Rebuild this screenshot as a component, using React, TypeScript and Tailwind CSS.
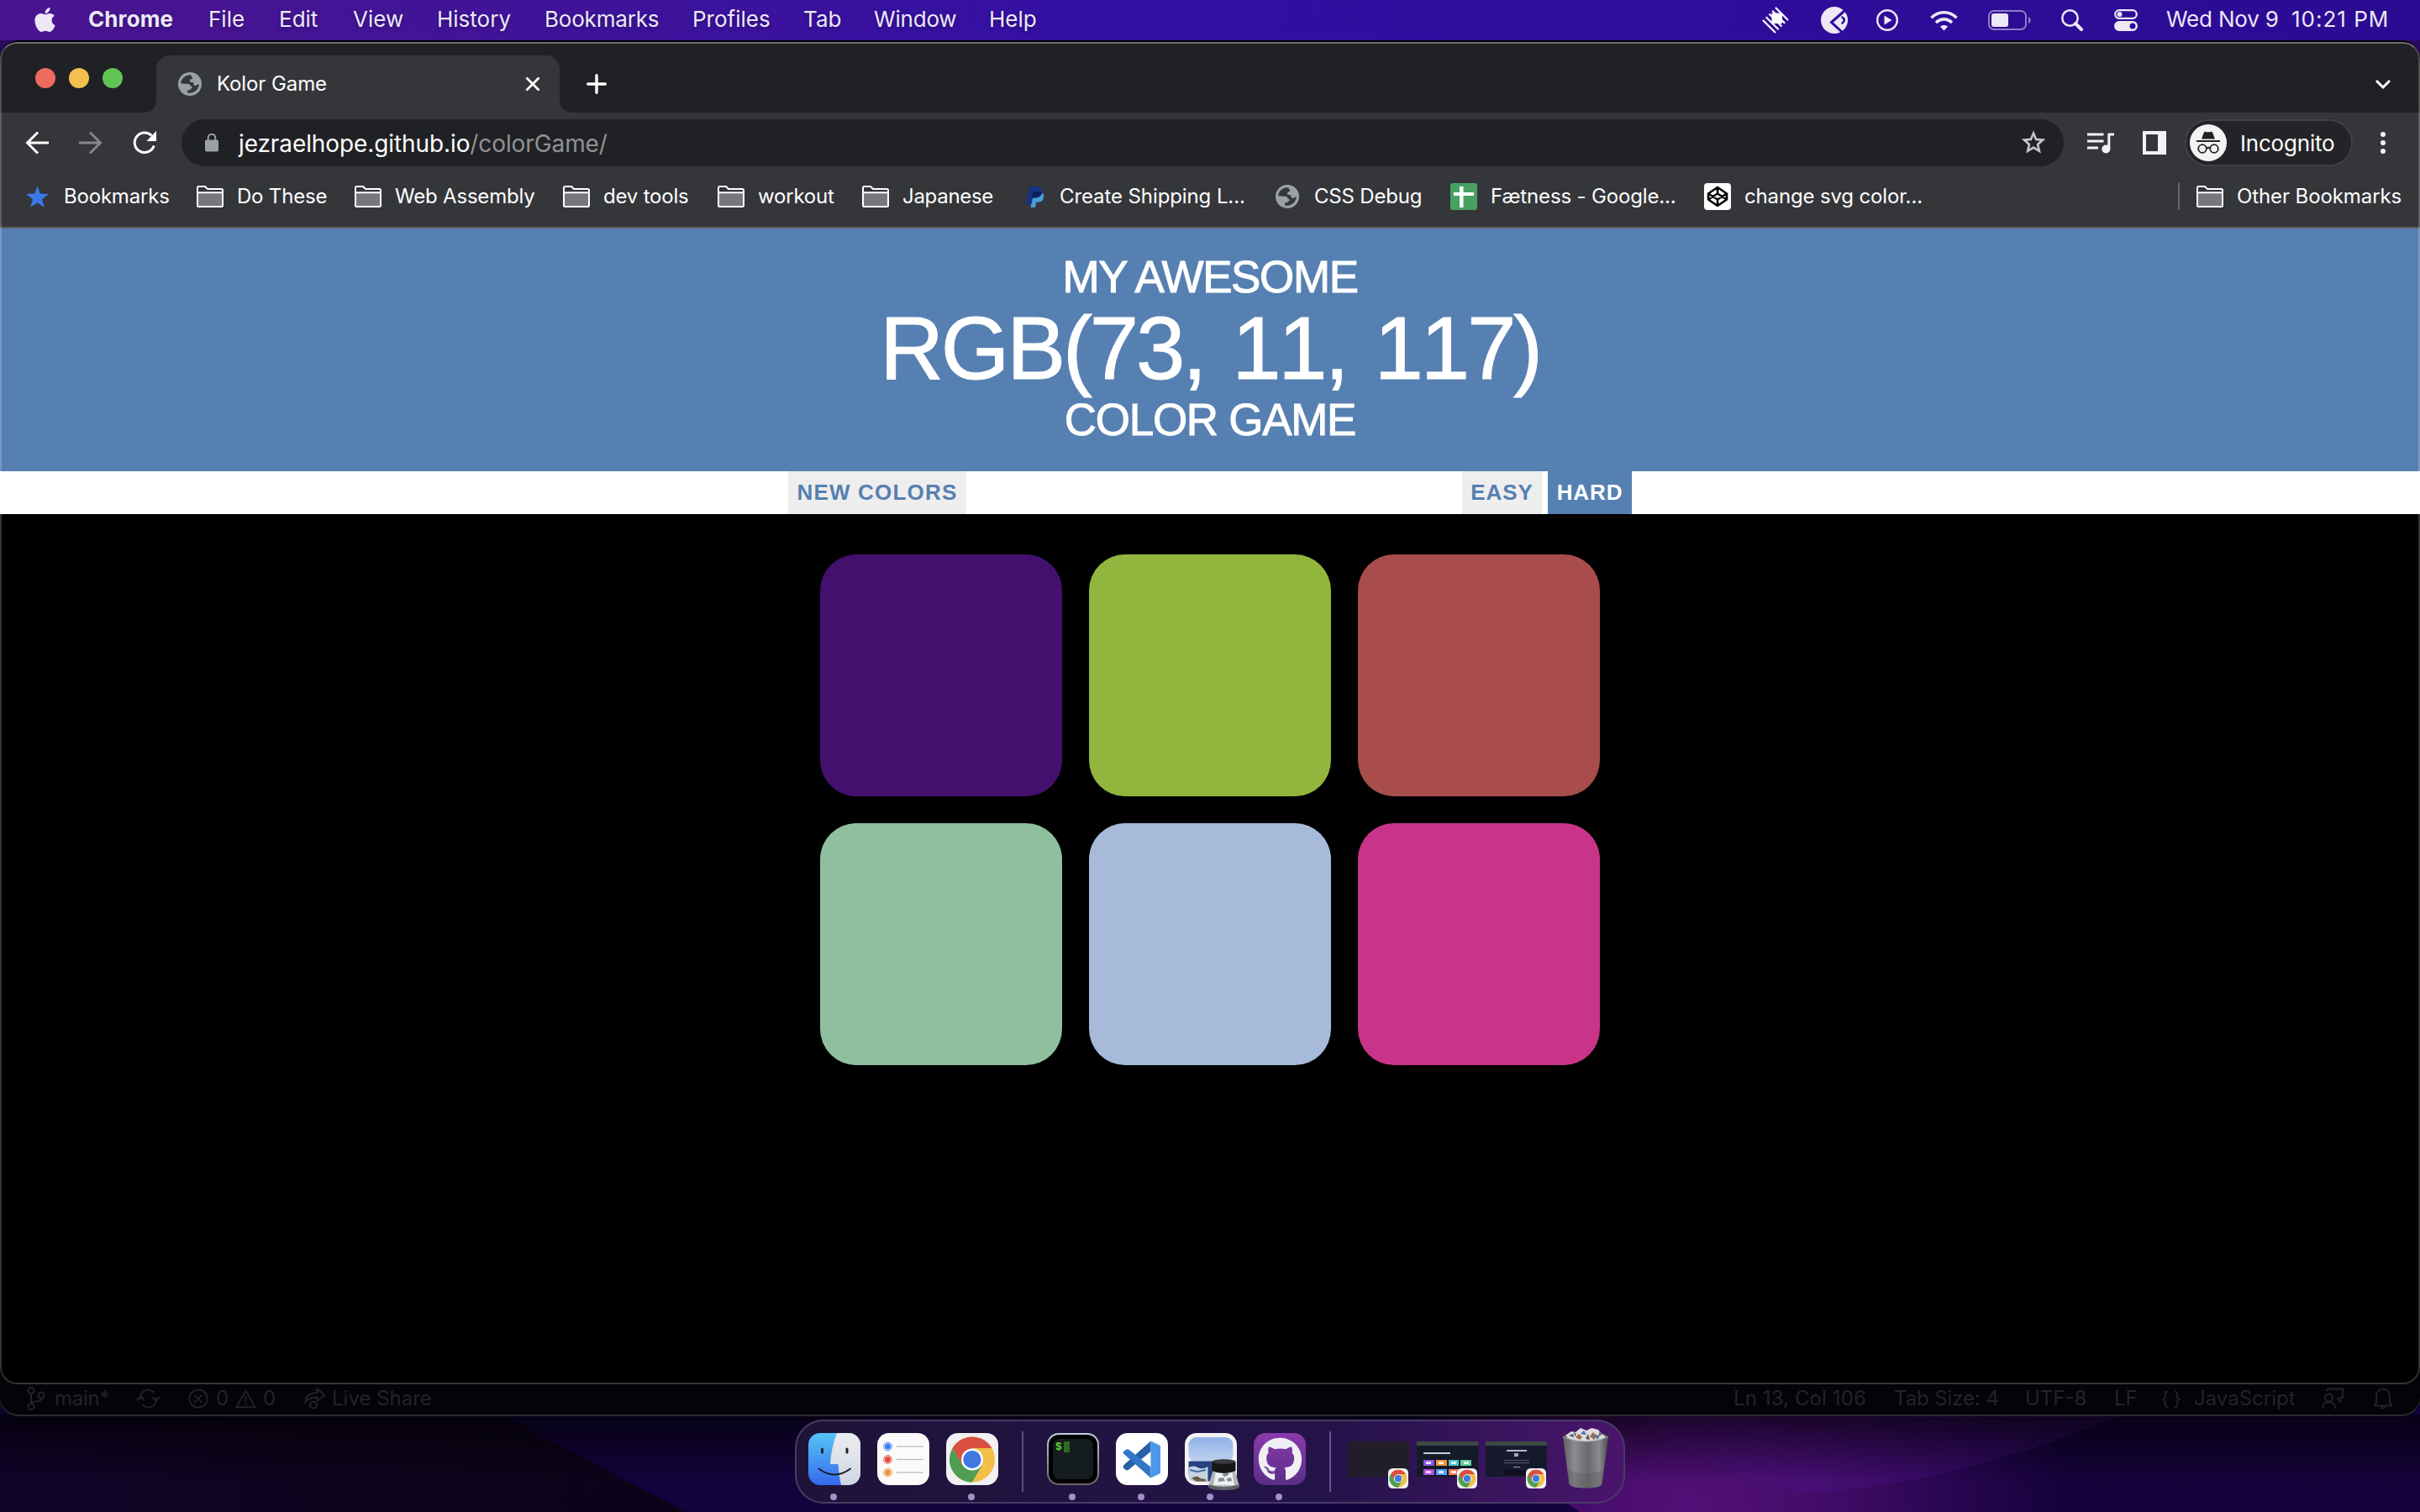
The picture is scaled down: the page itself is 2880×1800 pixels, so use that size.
import type { ReactNode } from "react";
import { FaApple, FaGithub } from "react-icons/fa";

const MENU: [string, string][] = [
  ["Chrome", "w-[143px] font-bold tracking-[0.1px]"],
  ["File", "w-[84px]"],
  ["Edit", "w-[88px]"],
  ["View", "w-[100px]"],
  ["History", "w-[128px]"],
  ["Bookmarks", "w-[176px] tracking-[-0.2px]"],
  ["Profiles", "w-[132px]"],
  ["Tab", "w-[84px]"],
  ["Window", "w-[137px] tracking-[-0.2px]"],
  ["Help", "w-[80px]"],
];

const SQUARES = [
  "bg-[#43106e]",
  "bg-[#91b53d]",
  "bg-[#a84c4c]",
  "bg-[#8fbf9f]",
  "bg-[#a8bada]",
  "bg-[#c83489]",
];

function MenuBar() {
  return (
    <div className="flex h-12 shrink-0 items-center bg-linear-to-r from-[#4a148f] via-[#330fa3] via-45% to-[#2b0b92] pl-10 pb-[2px] text-[26px] text-[#ece8f6]">
      <FaApple className="mr-[38px] h-[33px] w-[27px]" />
      {MENU.map(([t, c]) => (
        <span key={t} className={`${c} pb-px whitespace-nowrap [text-shadow:0_2px_4px_rgba(0,0,0,0.3)]`}>
          {t}
        </span>
      ))}
      <div className="ml-auto flex h-full items-center pt-[2px]">
        <svg className="mr-[38px] h-8 w-8" viewBox="0 0 32 32" fill="none" stroke="#fff" strokeWidth="2.200">
          <path d="M16 1l15 15M12.200 4.700l15 15M8.500 8.500l15 15M4.700 12.200l15 15M1 16l15 15" />
          <path d="M11.500 7.500h12.500v12.500h-12.500z" fill="#fff" stroke="none" />
        </svg>
        <svg className="mr-[34px] h-8 w-8" viewBox="0 0 32 32">
          <circle cx="16" cy="16" r="16" fill="#ece8f6" />
          <path d="M28 5 12.500 18.500 25 30" fill="none" stroke="#2b0c9b" strokeWidth="3" />
          <path d="M25.500 12.500c3 2 3 5 0 7" fill="none" stroke="#2b0c9b" strokeWidth="2.600" strokeLinecap="round" />
        </svg>
        <svg className="mr-[38px] h-[26px] w-[26px]" viewBox="0 0 26 26" fill="none">
          <circle cx="13" cy="13" r="11.800" stroke="#ece8f6" strokeWidth="2.400" />
          <path d="M9.500 7.500v11l9-5.500z" fill="#ece8f6" />
        </svg>
        <svg className="mr-[36px] h-[25px] w-[33px]" viewBox="0 0 33 25" fill="none" stroke="#ece8f6" strokeWidth="3.600">
          <path d="M1.500 9.200C10 .5 23 .5 31.500 9.200" />
          <path d="M7 15c5.500-5.500 13.500-5.500 19 0" />
          <path d="M16.500 24.500 12 19.700c2.500-2.400 6.500-2.400 9 0z" fill="#ece8f6" stroke="none" />
        </svg>
        <svg className="mr-[36px] h-6 w-[51px]" viewBox="0 0 51 24">
          <rect x="1" y="1" width="44" height="22" rx="6" fill="none" stroke="#8f7dc8" strokeWidth="2" />
          <rect x="4" y="4" width="20" height="16" rx="3" fill="#ece8f6" />
          <path d="M48 8c3.500 1.500 3.500 6.500 0 8z" fill="#8f7dc8" />
        </svg>
        <svg className="mr-[37px] h-[26px] w-[26px]" viewBox="0 0 26 26" fill="none" stroke="#ece8f6">
          <circle cx="10.500" cy="10.500" r="9.200" strokeWidth="2.500" />
          <path d="m17 17 7 7" strokeWidth="4" strokeLinecap="round" />
        </svg>
        <svg className="mr-[34px] h-[26px] w-7" viewBox="0 0 28 26">
          <rect x="1.200" y="1.200" width="25.600" height="9.600" rx="4.800" fill="none" stroke="#ece8f6" strokeWidth="2.200" />
          <circle cx="6.500" cy="6" r="3" fill="#ece8f6" />
          <rect y="14" width="28" height="12" rx="6" fill="#ece8f6" />
          <circle cx="22" cy="20" r="3.500" fill="#2b0c98" />
        </svg>
      </div>
      <span className="w-[149px] pb-px whitespace-nowrap tracking-[-0.2px]">Wed Nov 9</span>
      <span className="w-[153px] pb-px whitespace-nowrap tracking-[1px]">10:21 PM</span>
    </div>
  );
}

function Globe({ className }: { className: string }) {
  return (
    <svg viewBox="0 0 28 28" className={className}>
      <circle cx="14" cy="14" r="14" fill="#9aa0a6" />
      <path
        d="M15.500 3.200C9 2.700 4.200 7 3 12.800c1.500 1 4 .9 8 .9 2.500 0 3.400 1 3.600 2.800 3 .3 2.800 3-.1 3.300v1.500h-3.300v3.300c7 1.300 13.200-3.300 13.600-10.300-1.800.2-3 .8-3.800 2-2.500-.7-3-2.500-2.800-4.400h-4V8.500c2-.2 3-.6 3.100-2.300-1.300-.3-1.900-1.300-1.800-3z"
        fill="#35363a"
      />
    </svg>
  );
}

function Folder() {
  return (
    <svg viewBox="0 0 32 26" className="h-[26px] w-8">
      <path d="M1 2.500Q1 1 2.500 1H10l3 3h16.500Q31 4 31 5.500v18q0 1.500-1.500 1.500h-27Q1 25 1 23.500z" fill="#35363a" stroke="#fff" strokeWidth="2" />
      <path d="M2 8.500h28V24H2z" fill="#77787b" />
      <path d="M1 8.200h30" stroke="#fff" strokeWidth="2" />
    </svg>
  );
}

function TabStrip() {
  return (
    <div className="flex h-[84px] shrink-0 items-stretch bg-[#202124] pt-0.5">
      <div className="flex w-[170px] items-center gap-4 pl-[42px]">
        <span className="size-6 rounded-full bg-[#ed6a5e]" />
        <span className="size-6 rounded-full bg-[#f5bf4f]" />
        <span className="size-6 rounded-full bg-[#61c554]" />
      </div>
      <div className="mt-3.5 flex">
        <svg viewBox="0 0 16 16" className="size-4 self-end">
          <path d="M16 0v16H0Q16 16 16 0" fill="#35363a" />
        </svg>
        <div className="flex w-[480px] items-center rounded-t-[16px] bg-[#35363a] pl-[26px] text-2xl tracking-[-0.1px]">
          <Globe className="mr-[18px] size-7" />
          Kolor Game
          <svg viewBox="0 0 18 18" className="mr-[23px] ml-auto size-[18px]" stroke="#fff" strokeWidth="2.800">
            <path d="M1.500 1.500l15 15M16.500 1.500l-15 15" />
          </svg>
        </div>
        <svg viewBox="0 0 16 16" className="size-4 self-end">
          <path d="M0 0v16h16Q0 16 0 0" fill="#35363a" />
        </svg>
        <svg viewBox="0 0 24 24" className="ml-4 size-6 self-center" stroke="#fff" strokeWidth="3.400" strokeLinecap="round">
          <path d="M12 1.700v20.600M1.700 12h20.600" />
        </svg>
      </div>
      <svg viewBox="0 0 20 14" className="mt-[14px] mr-[34px] ml-auto h-3.5 w-5 self-center" fill="none" stroke="#fff" strokeWidth="3">
        <path d="m2 3 8 8 8-8" />
      </svg>
    </div>
  );
}

function Toolbar() {
  return (
    <div className="flex h-[72px] shrink-0 items-center bg-[#35363a] pl-[30px]">
      <svg viewBox="0 0 28 28" className="mr-9 size-7" fill="none" stroke="#fff" strokeWidth="2.900">
        <path d="M28 14H3M15 1.500 2.500 14 15 26.500" />
      </svg>
      <svg viewBox="0 0 28 28" className="mr-9 size-7" fill="none" stroke="#86878a" strokeWidth="2.900">
        <path d="M0 14h25M13 1.500 25.500 14 13 26.500" />
      </svg>
      <svg viewBox="0 0 28 28" className="mr-[30px] size-7" fill="none" stroke="#fff" strokeWidth="3">
        <path d="M22.500 5.500A11.800 11.800 0 1 0 25.200 17.500" />
        <path d="M28 0v12H16.500z" fill="#fff" stroke="none" />
      </svg>
      <div className="flex h-14 w-[2240px] items-center rounded-full bg-[#202124] pl-7 text-[28px] text-white">
        <svg viewBox="0 0 16 22" className="mr-6 mb-[1px] h-[22px] w-4">
          <rect y="7.500" width="16" height="14" rx="1.800" fill="#9aa0a6" />
          <path d="M3.700 8V5a4.300 4.300 0 0 1 8.600 0v3" fill="none" stroke="#9aa0a6" strokeWidth="2" />
        </svg>
        <span className="pt-px tracking-[-0.1px]">
          jezraelhope.github.io<span className="text-[#8f9194]">/colorGame/</span>
        </span>
        <svg viewBox="0 0 30 30" className="mr-[21px] ml-auto size-[30px]" fill="none" stroke="#c4c5c6" strokeWidth="2.600">
          <path d="m15 3.500 3.100 7.400 8 .7-6.100 5.300 1.900 7.900L15 20.600l-6.900 4.200 1.900-7.900-6.100-5.300 8-.7z" />
        </svg>
      </div>
      <svg viewBox="0 0 33 26" className="ml-[28px] h-[26px] w-[33px]" fill="none" stroke="#f1f3f4" strokeWidth="3">
        <path d="M0 3h19.500M0 11h19.500M0 19h13M25.800 21V3H32" strokeLinejoin="round" />
        <circle cx="22.300" cy="20.500" r="5" fill="#f1f3f4" stroke="none" />
      </svg>
      <svg viewBox="0 0 28 28" className="ml-[33px] size-7">
        <path d="M0 0h28v28H0zM4 4v20h14V4z" fill="#f1f3f4" fillRule="evenodd" />
      </svg>
      <div className="ml-[22px] flex h-14 w-[200px] items-center rounded-full border-2 border-[#404145] bg-[#242428] pl-1 text-[26px] tracking-[-0.2px]">
        <svg viewBox="0 0 44 44" className="mr-[16px] size-11">
          <circle cx="22" cy="22" r="22" fill="#f1f3f4" />
          <path d="M14 17.500 17 9.500q.4-1 1.500-.7 3.500 1 7 0 1.100-.3 1.500.7l3 8z" fill="#202124" />
          <path d="M8 20h28" stroke="#202124" strokeWidth="1.800" />
          <g fill="none" stroke="#202124" strokeWidth="1.800">
            <circle cx="15" cy="29" r="4.800" />
            <circle cx="29" cy="29" r="4.800" />
            <path d="M19.800 28.500q2.200-1.500 4.400 0" />
          </g>
        </svg>
        <span className="pt-px">Incognito</span>
      </div>
      <div className="ml-[33px] flex flex-col gap-1">
        <span className="size-1.5 rounded-full bg-[#f1f3f4]" />
        <span className="size-1.5 rounded-full bg-[#f1f3f4]" />
        <span className="size-1.5 rounded-full bg-[#f1f3f4]" />
      </div>
    </div>
  );
}

function PayPal() {
  return (
    <svg viewBox="0 0 22 26" className="ml-[6px] h-[26px] w-[22px]">
      <path d="M8 8h10q4 1 3 6.500-1 5-6 5h-2.500L11 26H5.500z" fill="#469bdb" />
      <path d="M4 1h10q6 .5 5 7-1.200 6.500-8 6.500H8L6.500 22H0z" fill="#173280" />
      <path d="M8 7h10.800q0 7-7.800 7.500H7z" fill="#0e1f5f" />
    </svg>
  );
}

function Sheet() {
  return (
    <svg viewBox="0 0 32 32" className="size-8">
      <rect width="32" height="32" rx="3" fill="#48a062" />
      <path d="M11 4h4.500v25H11zM4 11h24v4H4z" fill="#fff" />
    </svg>
  );
}

function CodePen() {
  return (
    <svg viewBox="0 0 32 32" className="size-8">
      <rect width="32" height="32" rx="4" fill="#fff" />
      <path d="m16 5 11 7.500v7L16 27 5 19.500v-7zM16 5v7.500M16 27v-7.500M5 12.500l11 7 11-7M5 19.500l11-7 11 7" fill="none" stroke="#000" strokeWidth="2.600" strokeLinejoin="round" />
    </svg>
  );
}

const BOOKMARKS: { t: string; box: string; pad: string; icon: ReactNode }[] = [
  { t: "Do These", box: "w-[188px]", pad: "ml-[16px]", icon: <Folder /> },
  { t: "Web Assembly", box: "w-[248px]", pad: "ml-[16px]", icon: <Folder /> },
  { t: "dev tools", box: "w-[184px]", pad: "ml-[16px]", icon: <Folder /> },
  { t: "workout", box: "w-[172px]", pad: "ml-[16px]", icon: <Folder /> },
  { t: "Japanese", box: "w-[189px]", pad: "ml-[16px] tracking-[-0.3px]", icon: <Folder /> },
  { t: "Create Shipping L...", box: "w-[303px]", pad: "ml-[18px] tracking-[-0.1px]", icon: <PayPal /> },
  { t: "CSS Debug", box: "w-[208px]", pad: "ml-[18px]", icon: <Globe className="size-7" /> },
  { t: "Fætness - Google...", box: "w-[302px]", pad: "ml-[16px] tracking-[-0.15px]", icon: <Sheet /> },
  { t: "change svg color...", box: "w-[300px]", pad: "ml-[16px] tracking-[-0.15px]", icon: <CodePen /> },
];

function BookmarkBar() {
  return (
    <div className="flex h-[66px] shrink-0 items-center border-b-2 border-[#5f6064] bg-[#35363a] pb-[8px] pl-[31px] text-2xl tracking-[-0.2px] whitespace-nowrap">
      <svg viewBox="0 0 26 25" className="size-[27px]">
        <path d="m13 0 3.300 8.700 9.700.4-7.600 6 2.600 9.400-8-5.400-8 5.400 2.600-9.400L0 9.100l9.700-.4z" fill="#3b78e7" />
      </svg>
      <span className="ml-[18px] w-[158px]">Bookmarks</span>
      {BOOKMARKS.map((b) => (
        <div key={b.t} className={`flex items-center ${b.box}`}>
          {b.icon}
          <span className={b.pad}>{b.t}</span>
        </div>
      ))}
      <span className="ml-auto h-8 w-0.5 bg-[#67686b]" />
      <div className="ml-[20px] flex w-[266px] items-center">
        <Folder />
        <span className="ml-[16px] tracking-[-0.1px]">Other Bookmarks</span>
      </div>
    </div>
  );
}

function Game() {
  return (
    <div className="flex grow flex-col bg-black font-['Liberation_Sans',sans-serif]">
      <h1 className="flex h-[289px] flex-col items-center bg-[#5680b1] pt-[28px] text-[53px] font-normal whitespace-nowrap text-white [-webkit-text-stroke:1px_white]">
        <span className="h-[60px] leading-[60px] tracking-[-1.400px]">MY AWESOME</span>
        <span className="h-[108px] pt-px text-[105px] leading-[108px] tracking-[-3.200px] [font-kerning:none] [word-spacing:7px]">
          RGB(73, 11, 117)
        </span>
        <span className="h-[63px] leading-[63px] tracking-[-1.300px]">COLOR GAME</span>
      </h1>
      <div className="flex h-[51px] justify-center bg-white text-[26px] font-bold tracking-[1.2px] whitespace-nowrap text-[#5680b1]">
        <button className="w-[212px] bg-[#eeeeee]">NEW COLORS</button>
        <button className="ml-[590px] w-[95px] bg-[#eeeeee] tracking-[0.9px]">EASY</button>
        <button className="ml-[7px] w-[100px] bg-[#5680b1] tracking-[0.9px] text-white">HARD</button>
      </div>
      <div className="mt-12 grid grid-cols-[repeat(3,288px)] justify-center gap-8">
        {SQUARES.map((c) => (
          <div key={c} className={`h-72 rounded-[43px] ${c}`} />
        ))}
      </div>
    </div>
  );
}

function StatusBar() {
  return (
    <div className="flex h-[36px] shrink-0 items-center pb-[2px] pl-8 text-[24px] whitespace-nowrap text-[#22222d]">
      <svg viewBox="0 0 22 28" className="h-7 w-[22px]" fill="none" stroke="currentColor" strokeWidth="2">
        <circle cx="5" cy="4.500" r="3.500" />
        <circle cx="17" cy="10" r="3.500" />
        <circle cx="5" cy="23.500" r="3.500" />
        <path d="M5 8v12M17 13.500q0 4-6 4-6 0-6 3" />
      </svg>
      <span className="ml-[11px] w-[98px] tracking-[-0.3px]">main*</span>
      <svg viewBox="0 0 27 24" className="h-6 w-[27px]" fill="none" stroke="currentColor" strokeWidth="2">
        <path d="M4 13A9.500 9.500 0 0 1 20.500 5M23 11a9.500 9.500 0 0 1-16.500 8M0 14l4.500-4.500L9 14M18 10l4.500 4.500L27 10" />
      </svg>
      <svg viewBox="0 0 26 26" className="ml-[34px] size-6" fill="none" stroke="currentColor" strokeWidth="2">
        <circle cx="13" cy="13" r="11.500" />
        <path d="m8 8 10 10M18 8 8 18" />
      </svg>
      <span className="ml-[9px] w-[23px]">0</span>
      <svg viewBox="0 0 26 24" className="h-6 w-[25px]" fill="none" stroke="currentColor" strokeWidth="2">
        <path d="M13 2 24.500 22.500h-23zM13 9v7M13 18v2.500" />
      </svg>
      <span className="ml-[8px] w-[49px]">0</span>
      <svg viewBox="0 0 26 26" className="h-[26px] w-[26px]" fill="none" stroke="currentColor" strokeWidth="2">
        <path d="M1.500 17C2 9 8 6 15.500 6V1.500L24.500 9l-9 7v-4.500C9 11.500 5 12.500 1.500 17z" />
        <circle cx="11" cy="20.500" r="4" />
      </svg>
      <span className="ml-[7px]">Live Share</span>
      <span className="ml-auto w-[191px] tracking-[0.1px]">Ln 13, Col 106</span>
      <span className="w-[156px] tracking-[-0.1px]">Tab Size: 4</span>
      <span className="w-[106px]">UTF-8</span>
      <span className="w-[56px]">LF</span>
      <span className="w-[39px] text-[22px] tracking-[5px]">{"{}"}</span>
      <span className="w-[152px]">JavaScript</span>
      <svg viewBox="0 0 26 26" className="h-[26px] w-[26px]" fill="none" stroke="currentColor" strokeWidth="2">
        <circle cx="8.500" cy="12" r="4.500" />
        <path d="M1 25q0-8 7.500-8T16 25M7 4V1.500h18V12h-3.500v4L18 12.500" />
      </svg>
      <svg viewBox="0 0 22 26" className="mr-[33px] ml-[36px] h-[26px] w-[22px]" fill="none" stroke="currentColor" strokeWidth="2">
        <path d="M1 21.500h20L19 17V9.500a8 8 0 0 0-16 0V17zM8 22q3 5 6 0" />
      </svg>
    </div>
  );
}

function ChromeLogo() {
  return (
    <>
      <circle cx="31" cy="31.500" r="27" fill="#f2bf47" />
      <path d="M7.600 18A27 27 0 0 1 54.400 18H31L19.300 38.200z" fill="#d95040" />
      <path d="M7.600 18A27 27 0 0 0 31 58.500L42.700 38.200H19.300z" fill="#4f9e52" />
      <circle cx="31" cy="31.500" r="13" fill="#fff" />
      <circle cx="31" cy="31.500" r="10.600" fill="#3f78e0" />
    </>
  );
}

function ChromeTile({ className }: { className: string }) {
  return (
    <svg viewBox="0 0 62 62" className={className}>
      <rect width="62" height="62" rx="14" fill="#f1f1f4" />
      <ChromeLogo />
    </svg>
  );
}

function DockItem({ running, children }: { running?: boolean; children: ReactNode }) {
  return (
    <div className="flex w-[82px] flex-col items-center">
      {children}
      <span className={`mt-[10px] mr-0.5 size-2 rounded-full ${running ? "bg-[#a38fc9]" : ""}`} />
    </div>
  );
}

function Finder() {
  return (
    <svg viewBox="0 0 62 62" className="size-[62px]">
      <defs>
        <linearGradient id="finderBlue" x2="0" y2="1">
          <stop stopColor="#55c5f7" />
          <stop offset="1" stopColor="#3568ee" />
        </linearGradient>
        <linearGradient id="finderGrey" x2="0" y2="1">
          <stop stopColor="#ececee" />
          <stop offset="1" stopColor="#cfd7e4" />
        </linearGradient>
        <clipPath id="finderClip">
          <rect width="62" height="62" rx="14" />
        </clipPath>
      </defs>
      <g clipPath="url(#finderClip)">
        <rect width="62" height="62" fill="url(#finderBlue)" />
        <path d="M34 0Q27 18 26 37h9.500Q36 50 39 62h23V0z" fill="url(#finderGrey)" />
      </g>
      <path d="M16.500 19v4M46 19v4" stroke="#222" strokeWidth="3" strokeLinecap="round" />
      <path d="M12.500 42.500q18.500 14 37.500 0" fill="none" stroke="#1b1b22" strokeWidth="2" strokeLinecap="round" />
    </svg>
  );
}

const REMINDER_ROWS = [
  { color: "#3b7cf0", y: 16 },
  { color: "#e2493c", y: 31.5 },
  { color: "#e8953a", y: 47 },
];

function Reminders() {
  return (
    <svg viewBox="0 0 62 62" className="size-[62px]">
      <rect width="62" height="62" rx="14" fill="#fbfaf8" />
      {REMINDER_ROWS.map(({ color, y }) => (
        <g key={color}>
          <circle cx="12.500" cy={y} r="3.400" fill={color} />
          <circle cx="12.500" cy={y} r="4.800" fill="none" stroke={color} strokeWidth="1" />
          <path d={`M23 ${y}h32`} stroke="#b9b9bb" strokeWidth="1.200" />
        </g>
      ))}
    </svg>
  );
}

function Terminal() {
  return (
    <div className="size-[62px] rounded-[14px] bg-linear-to-b from-[#bdd3dc] to-[#6a6462] p-[2px]">
      <div className="size-full rounded-[12px] bg-black p-[5px]">
        <div className="flex size-full rounded-[8px] bg-[#151c1f] pt-[3px] pl-[3px] font-['Liberation_Mono',monospace] text-[13px] leading-[13px] font-bold text-[#5fd83d]">
          $<span className="ml-[2px] h-[13px] w-[7px] bg-[#2d6a22]" />
        </div>
      </div>
    </div>
  );
}

function VSCode() {
  return (
    <svg viewBox="0 0 62 62" className="size-[62px]">
      <rect width="62" height="62" rx="14" fill="#fff" />
      <path d="M41.500 9.500 9.500 38 8.700 40v1.500l4 3 2-.6L41.500 22z" fill="#2860a5" />
      <path d="M41.500 53.500 9 24.500q-1-1.500 0-2.500l3.500-2.500q1.500-.8 3 .2L41.500 40.500z" fill="#3277c6" />
      <path d="M41.500 9.500 52 14.500q1 .5 1 2v30q0 1.500-1 2l-10.500 5z" fill="#4a98e8" />
    </svg>
  );
}

function Preview() {
  return (
    <svg viewBox="0 0 66 68" className="-mb-[6px] ml-1 h-[68px] w-[66px]">
      <defs>
        <linearGradient id="sky" x2="0" y2="1">
          <stop stopColor="#92b2ec" />
          <stop offset="1" stopColor="#c0d0ec" />
        </linearGradient>
      </defs>
      <rect width="62" height="62" rx="14" fill="#f4f3f1" />
      <rect x="4.500" y="5" width="53" height="30" rx="9" fill="url(#sky)" />
      <path d="M4.500 33.500h53V48q0 9.500-9.500 9.500H14Q4.500 57.500 4.500 48z" fill="#28427f" />
      <path d="M4.500 41q6-3 11 0t12-1v17.500H14Q4.500 57.500 4.500 48z" fill="#c6d3e2" />
      <path d="M8 54q6-5 11 0l6 1v2.500H14z" fill="#6a6047" />
      <path d="M6 44l9 2 10-2" fill="none" stroke="#4c6c9e" strokeWidth="2" />
      <path d="M33.500 45h26L65 63q-2 4-18.500 4T28 63z" fill="#b3b5b9" />
      <path d="M37 45h19l3 17H34z" fill="#eceef1" />
      <path d="m44 50 6-3 3 2-5 3zM40 54l6-1 2 4-8 1zM50 54l5-1 1 4-5 1z" fill="#7f8998" />
      <path d="M29 61.500q18 5 35 0L65 64q-2 4-18.500 4T28 64z" fill="#5d5f63" />
      <path d="M32.500 34.500q14-6 28 0V45q-14 6-28 0z" fill="#151517" />
      <ellipse cx="46.500" cy="34" rx="14" ry="2.800" fill="#3a3a3d" />
    </svg>
  );
}

function GitHub() {
  return (
    <div className="flex size-[62px] items-center justify-center rounded-[14px] bg-linear-to-b from-[#8b3bab] to-[#5a2d88]">
      <FaGithub className="size-[53px] text-[#f0eff4]" />
    </div>
  );
}

function WindowThumb({ children, className }: { children?: ReactNode; className: string }) {
  return (
    <div className="relative h-[42px] w-[73px]">
      <div className={`h-full w-full overflow-hidden ${className}`}>{children}</div>
      <ChromeTile className="absolute right-px -bottom-[14px] size-6" />
    </div>
  );
}

const TILES = [
  "bg-[#8a55e6]",
  "bg-[#f0973c]",
  "bg-[#4fc3c4]",
  "bg-[#5fcf9a]",
  "bg-[#b84be0]",
  "bg-[#56a0ee]",
  "bg-[#f07a5a]",
  "bg-[#e85a9a]",
];

function Trash() {
  return (
    <svg viewBox="0 0 56 72" className="h-[72px] w-14">
      <defs>
        <linearGradient id="can">
          <stop stopColor="#5c5c60" />
          <stop offset="0.250" stopColor="#8d8d91" />
          <stop offset="0.550" stopColor="#6a6a6e" />
          <stop offset="0.800" stopColor="#8b8b8f" />
          <stop offset="1" stopColor="#4c4c50" />
        </linearGradient>
      </defs>
      <ellipse cx="28" cy="10.500" rx="27" ry="6" fill="#4f4f53" />
      <path d="m4 9 7-5 5 1 6-5 7 3 6-3 8 2 3 4 6 4-8 7H12z" fill="#dcdcde" />
      <path d="m16 11 4-4 4 4-3 3zM33 10l4-5 5 5-4 4z" fill="#a0694e" />
      <path d="m22 7 4-4 3 5zM39 8l6 1-3 5z" fill="#4a6fa8" />
      <path d="m8 9 5-2 1 4zM28 13l3-6 2 7zM14 5l3 2-2 3zM44 5l4 3-4 1z" fill="#55555a" />
      <path d="M1 10.500q27 11 54 0L47.500 67Q44 71.500 28 71.500T8.500 67z" fill="url(#can)" />
      <path d="M1 10.500q27 11 54 0" fill="none" stroke="#a9a9ad" strokeWidth="1.200" />
      <path d="M6 50q22 8 44 0l-2.500 17Q44 71.500 28 71.500T8.500 67z" fill="#55555a" opacity="0.350" />
    </svg>
  );
}

function Dock() {
  return (
    <div className="mt-1 flex h-[100px] w-[988px] shrink-0 items-start self-center rounded-[34px] border-2 border-[#4a3a68] bg-linear-to-r from-[#1e1338] via-[#24134a] via-65% to-[#4a146c] pt-[14px] pl-[4px]">
      <DockItem running><Finder /></DockItem>
      <DockItem><Reminders /></DockItem>
      <DockItem running><ChromeTile className="size-[62px]" /></DockItem>
      <span className="mx-[18px] -mt-0.5 h-[72px] w-0.5 bg-[#5d4d80]" />
      <DockItem running><Terminal /></DockItem>
      <DockItem running><VSCode /></DockItem>
      <DockItem running><Preview /></DockItem>
      <DockItem running><GitHub /></DockItem>
      <span className="mr-5 ml-[18px] -mt-0.5 h-[72px] w-0.5 bg-[#6a5690]" />
      <div className="mt-[10px] flex gap-[9px]">
        <WindowThumb className="bg-[#221e29]" />
        <WindowThumb className="bg-[#131a28]">
          <div className="h-[5px] bg-[#3b4a42]" />
          <div className="mt-[8px] ml-2 h-0.5 w-8 bg-[#c8ccd4]" />
          <div className="mt-[7px] grid grid-cols-4 gap-x-[2px] gap-y-[4px] px-2">
            {TILES.map((c) => (
              <div key={c} className={`flex h-[7px] items-center justify-center ${c}`}>
                <span className="h-[3px] w-[6px] bg-white/80" />
              </div>
            ))}
          </div>
        </WindowThumb>
        <WindowThumb className="flex flex-col items-center bg-[#17192d]">
          <div className="h-[5px] w-full shrink-0 bg-[#3b4a42]" />
          <div className="mt-[5px] h-[2px] w-6 bg-[#b8bac8]" />
          <div className="mt-[2px] h-[4px] w-[5px] bg-[#a8aab8]" />
          <div className="mt-[4px] h-px w-[30px] bg-[#5a5c70]" />
          <div className="mt-[2px] h-px w-[30px] bg-[#5a5c70]" />
          <div className="mt-[4px] h-px w-[8px] bg-[#9a9cb0]" />
          <div className="mt-[3px] h-[6px] w-[30px] bg-[#0e1020]" />
        </WindowThumb>
      </div>
      <div className="-mt-[6px] ml-[18px]">
        <Trash />
      </div>
    </div>
  );
}

function Wallpaper() {
  return (
    <svg viewBox="0 0 2880 1800" className="absolute inset-0 -z-10 h-[1800px] w-[2880px]">
      <defs>
        <radialGradient id="glow" gradientUnits="userSpaceOnUse" cx="2010" cy="1800" r="460">
          <stop stopColor="#521078" />
          <stop offset="0.350" stopColor="#430c68" />
          <stop offset="0.700" stopColor="#27064f" />
          <stop offset="1" stopColor="#14023a" />
        </radialGradient>
        <linearGradient id="base">
          <stop stopColor="#10042a" />
          <stop offset="0.400" stopColor="#0f041f" />
          <stop offset="1" stopColor="#0b0318" />
        </linearGradient>
        <linearGradient id="shade" x2="0" y2="1">
          <stop stopColor="#000" stopOpacity="0.650" />
          <stop offset="1" stopColor="#000" stopOpacity="0" />
        </linearGradient>
      </defs>
      <rect width="2880" height="1800" fill="#2a0a60" />
      <rect y="1600" width="830" height="200" fill="url(#base)" />
      <path d="M590 1680 816 1800H2880V1600H590z" fill="#12033c" />
      <path d="M1700 1680Q1790 1740 1880 1800H2880V1680z" fill="url(#glow)" />
      <path d="M1940 1680H2535Q2460 1712 2390 1733 2280 1768 2150 1778 2040 1760 1940 1680z" fill="#4c1288" opacity="0.350" />
      <rect y="1684" width="2880" height="80" fill="url(#shade)" />
    </svg>
  );
}

export default function App() {
  return (
    <div className="relative isolate flex h-[1800px] w-[2880px] flex-col overflow-hidden font-['Inter',sans-serif] text-white">
      <Wallpaper />
      <MenuBar />
      <div className="flex h-[1638px] shrink-0 flex-col rounded-[22px] border-t-2 border-black bg-[#030407] shadow-[inset_0_-2px_0_#2a2b2d]">
        <div className="relative flex h-[1598px] shrink-0 flex-col overflow-hidden rounded-[20px]">
          <TabStrip />
          <Toolbar />
          <BookmarkBar />
          <Game />
          <div className="pointer-events-none absolute inset-0 rounded-[20px] border-2 border-x-white/20 border-t-white/35 border-b-white/20" />
        </div>
        <StatusBar />
      </div>
      <Dock />
    </div>
  );
}
